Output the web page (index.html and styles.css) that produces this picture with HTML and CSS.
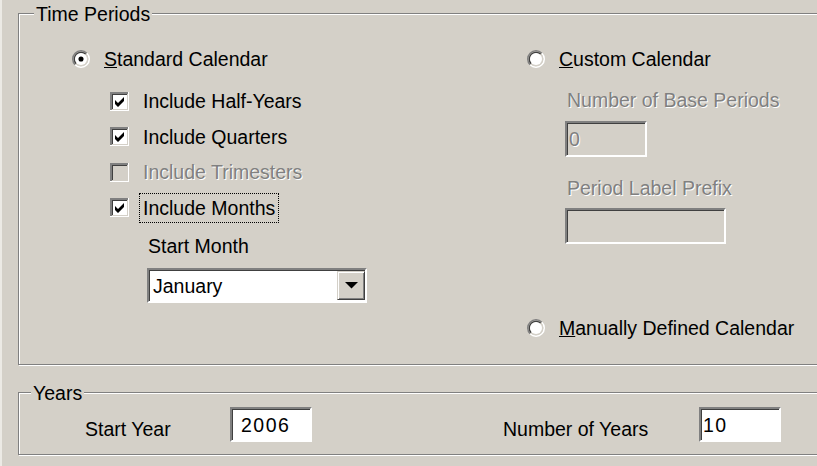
FILE: index.html
```html
<!DOCTYPE html>
<html>
<head>
<meta charset="utf-8">
<link rel="stylesheet" href="styles.css">
</head>
<body>
<div class="dialog">
  <div class="group group-time">
    <div class="legend">Time Periods</div>
    <div class="time-cols">
      <div class="col">
        <div class="radio-row">
          <svg class="radio" viewBox="0 0 12 12"><path d="M2.11 9.89A5.5 5.5 0 0 1 9.89 2.11" fill="none" stroke="#808080"/><path d="M9.89 2.11A5.5 5.5 0 0 1 2.11 9.89" fill="none" stroke="#fff"/><path d="M2.82 9.18A4.5 4.5 0 0 1 9.18 2.82" fill="none" stroke="#404040"/><path d="M9.18 2.82A4.5 4.5 0 0 1 2.82 9.18" fill="none" stroke="#d4d0c8"/><circle cx="6" cy="6" r="4" fill="#fff"/><circle cx="6" cy="6" r="1.7" fill="#000"/></svg>
          <span><u>S</u>tandard Calendar</span>
        </div>
        <div class="check-list">
          <div class="check-row">
            <svg class="check" viewBox="0 0 19 19"><rect width="19" height="19" fill="#fff"/><path d="M0 0H18V2H2V18H0Z" fill="#808080"/><path d="M2 2H17V3H3V17H2Z" fill="#404040"/><path d="M17 2H18V18H2V17H17Z" fill="#d4d0c8"/><rect x="3" y="3" width="14" height="14" fill="#fff"/><path d="M5 8L8 11L14 5V9L8 15L5 12Z" fill="#000"/></svg>
            <span class="check-label">Include Half-Years</span>
          </div>
          <div class="check-row">
            <svg class="check" viewBox="0 0 19 19"><rect width="19" height="19" fill="#fff"/><path d="M0 0H18V2H2V18H0Z" fill="#808080"/><path d="M2 2H17V3H3V17H2Z" fill="#404040"/><path d="M17 2H18V18H2V17H17Z" fill="#d4d0c8"/><rect x="3" y="3" width="14" height="14" fill="#fff"/><path d="M5 8L8 11L14 5V9L8 15L5 12Z" fill="#000"/></svg>
            <span class="check-label">Include Quarters</span>
          </div>
          <div class="check-row">
            <svg class="check" viewBox="0 0 19 19"><rect width="19" height="19" fill="#fff"/><path d="M0 0H18V2H2V18H0Z" fill="#808080"/><path d="M2 2H17V3H3V17H2Z" fill="#404040"/><path d="M17 2H18V18H2V17H17Z" fill="#d4d0c8"/><rect x="3" y="3" width="14" height="14" fill="#d4d0c8"/></svg>
            <span class="check-label disabled">Include Trimesters</span>
          </div>
          <div class="check-row">
            <svg class="check" viewBox="0 0 19 19"><rect width="19" height="19" fill="#fff"/><path d="M0 0H18V2H2V18H0Z" fill="#808080"/><path d="M2 2H17V3H3V17H2Z" fill="#404040"/><path d="M17 2H18V18H2V17H17Z" fill="#d4d0c8"/><rect x="3" y="3" width="14" height="14" fill="#fff"/><path d="M5 8L8 11L14 5V9L8 15L5 12Z" fill="#000"/></svg>
            <span class="check-label focus">Include Months</span>
          </div>
        </div>
        <div class="field-label">Start Month</div>
        <div class="combo">
          <span class="combo-text">January</span>
          <span class="combo-btn"><svg class="arrow" viewBox="0 0 13 7"><polygon points="0,0 13,0 6.5,6.5" fill="#000"/></svg></span>
        </div>
      </div>
      <div class="col">
        <div class="radio-row">
          <svg class="radio" viewBox="0 0 12 12"><path d="M2.11 9.89A5.5 5.5 0 0 1 9.89 2.11" fill="none" stroke="#808080"/><path d="M9.89 2.11A5.5 5.5 0 0 1 2.11 9.89" fill="none" stroke="#fff"/><path d="M2.82 9.18A4.5 4.5 0 0 1 9.18 2.82" fill="none" stroke="#404040"/><path d="M9.18 2.82A4.5 4.5 0 0 1 2.82 9.18" fill="none" stroke="#d4d0c8"/><circle cx="6" cy="6" r="4" fill="#fff"/></svg>
          <span><u>C</u>ustom Calendar</span>
        </div>
        <div class="sub-label disabled">Number of Base Periods</div>
        <div class="textbox disabled tb-base">0</div>
        <div class="sub-label sub-label-2 disabled">Period Label Prefix</div>
        <div class="textbox disabled tb-prefix"></div>
        <div class="radio-row radio-manual">
          <svg class="radio" viewBox="0 0 12 12"><path d="M2.11 9.89A5.5 5.5 0 0 1 9.89 2.11" fill="none" stroke="#808080"/><path d="M9.89 2.11A5.5 5.5 0 0 1 2.11 9.89" fill="none" stroke="#fff"/><path d="M2.82 9.18A4.5 4.5 0 0 1 9.18 2.82" fill="none" stroke="#404040"/><path d="M9.18 2.82A4.5 4.5 0 0 1 2.82 9.18" fill="none" stroke="#d4d0c8"/><circle cx="6" cy="6" r="4" fill="#fff"/></svg>
          <span><u>M</u>anually Defined Calendar</span>
        </div>
      </div>
    </div>
  </div>
  <div class="group group-years">
    <div class="legend">Years</div>
    <div class="years-row">
      <span class="year-label year-label-start">Start Year</span>
      <div class="textbox tb-year tb-start">2006</div>
      <span class="year-label year-label-count">Number of Years</span>
      <div class="textbox tb-year">10</div>
    </div>
  </div>
</div>
</body>
</html>
```

FILE: styles.css
```css
html, body {
  margin: 0;
  overflow: hidden;
}
body {
  width: 817px;
  height: 466px;
  background: #d4d0c8;
  font-family: "Liberation Sans", Arial, sans-serif;
  font-size: 19.5px;
  line-height: 22px;
  color: #000;
}
.dialog {
  box-sizing: border-box;
  height: 466px;
  padding: 13px 0 0 18px;
  box-shadow: inset 2px 0 0 #eceae5;
}
.group {
  position: relative;
  box-sizing: border-box;
  width: 812px;
  border: 1px solid #808080;
  box-shadow: inset 1px 1px 0 #fff, 1px 1px 0 #fff;
}
.group-time { height: 352px; }
.group-years { height: 63px; margin-top: 27px; }
.legend {
  position: absolute;
  top: -11px;
  left: 15px;
  padding: 0 2px;
  background: #d4d0c8;
}
.group-years .legend { left: 12px; }

.time-cols {
  display: grid;
  grid-template-columns: 455px 1fr;
  padding: 34px 0 0 53px;
}
.col {
  display: flex;
  flex-direction: column;
  align-items: flex-start;
}
.radio-row {
  display: flex;
  align-items: center;
  height: 22px;
}
.radio {
  width: 18px;
  height: 18px;
  flex: none;
  margin-right: 14px;
}
.check-list {
  display: flex;
  flex-direction: column;
  gap: 5.5px;
  margin: 16px 0 0 38px;
}
.check-row {
  display: flex;
  align-items: center;
  height: 30px;
}
.check {
  width: 19px;
  height: 19px;
  flex: none;
  margin-right: 10px;
}
.check-label {
  border: 1px dotted transparent;
  padding: 3px;
}
.check-label.focus { border-color: #000; }
.disabled {
  color: #808080;
  text-shadow: 1px 1px 0 #fff;
}
.field-label { margin: 12.5px 0 0 76px; }

.combo {
  box-sizing: border-box;
  display: flex;
  align-items: stretch;
  width: 220px;
  height: 35px;
  margin: 11px 0 0 75px;
  padding: 1px 0 1px 4px;
  background: #fff;
  border: 2px solid;
  border-color: #808080 #fff #fff #808080;
  box-shadow: inset 1px 1px 0 #404040;
}
.combo-text {
  flex: 1;
  display: flex;
  align-items: center;
}
.combo-btn {
  box-sizing: border-box;
  width: 28px;
  display: flex;
  align-items: center;
  justify-content: center;
  background: #d4d0c8;
  border: 1px solid;
  border-color: #d4d0c8 #404040 #404040 #d4d0c8;
  box-shadow: inset 1px 1px 0 #fff, inset -1px -1px 0 #808080;
}
.arrow { width: 13px; height: 7px; }

.sub-label { margin: 19px 0 0 40px; }
.sub-label-2 { margin-top: 20px; }
.textbox {
  box-sizing: border-box;
  display: flex;
  align-items: center;
  padding-left: 2px;
  background: #fff;
  border: 2px solid;
  border-color: #808080 #fff #fff #808080;
  box-shadow: inset 1px 1px 0 #404040;
}
.textbox.disabled { background: #d4d0c8; }
.tb-base {
  width: 82px;
  height: 36px;
  margin: 10px 0 0 38px;
}
.tb-prefix {
  width: 161px;
  height: 36px;
  margin: 9px 0 0 38px;
}
.radio-manual { margin-top: 73px; }

.years-row {
  display: flex;
  align-items: flex-start;
  padding: 14px 0 0 66px;
}
.year-label { margin-top: 11px; }
.year-label-start { width: 145px; }
.year-label-count { width: 196px; margin-left: 191px; }
.tb-year {
  width: 82px;
  height: 35px;
  letter-spacing: 1.5px;
}
.tb-start { padding-left: 9px; }
```
